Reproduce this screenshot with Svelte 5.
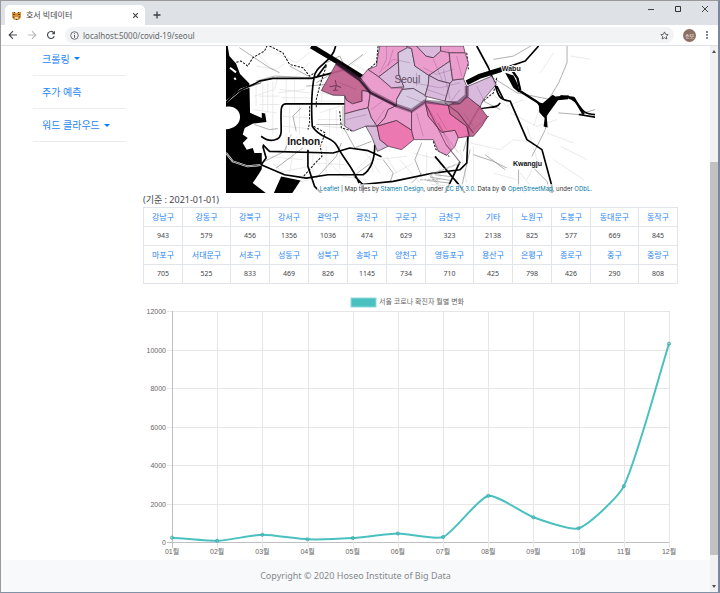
<script>
  const menu = [
    { label: '크롤링', more: true },
    { label: '주가 예측', more: false },
    { label: '워드 클라우드', more: true },
  ];

  const rows = [
    [['강남구', 943], ['강동구', 579], ['강북구', 456], ['강서구', 1356], ['관악구', 1036], ['광진구', 474], ['구로구', 629], ['금천구', 323], ['기타', 2138], ['노원구', 825], ['도봉구', 577], ['동대문구', 669], ['동작구', 845]],
    [['마포구', 705], ['서대문구', 525], ['서초구', 833], ['성동구', 469], ['성북구', 826], ['송파구', 1145], ['양천구', 734], ['영등포구', 710], ['용산구', 425], ['은평구', 798], ['종로구', 426], ['중구', 290], ['중랑구', 808]],
  ];
  const wide = [1, 7, 11];

  // district outlines: [fill, points]
  const pink = '#e995ca', lilac = '#d6b4da', pale = '#d4c4de', rose = '#ea6daa', wine = '#bf5d8c';
  const districts = [
    [wine, '60,52 15,133 50,147 85,148 90,162 108,173 137,165 137,133 162,138 130,100'],
    [pink, '85,150 90,162 108,173 137,165 137,133 162,138 155,185 125,192 85,203'],
    [lilac, '85,203 125,192 155,185 165,215 182,240 148,240 110,255 85,240'],
    [lilac, '148,240 182,240 190,280 215,300 183,315 165,270'],
    [pink, '162,138 240,178 215,190 205,215 182,240 165,215 155,185'],
    [pink, '215,190 240,178 285,195 285,252 240,223 182,240 205,215'],
    [rose, '182,240 240,223 285,252 292,280 255,310 215,300 190,280'],
    [pink, '285,195 325,165 335,210 375,258 415,252 425,272 415,300 390,327 365,315 350,280 292,280 285,252'],
    [rose, '325,165 395,178 400,203 450,240 458,270 425,275 415,252 375,258 335,210'],
    [wine, '395,178 450,150 490,182 512,212 495,240 470,270 458,270 450,240 400,203'],
    [lilac, '450,150 450,122 525,90 538,115 500,160 490,182'],
    [pink, '132,95 155,70 187,92 225,125 258,125 240,160 240,178 162,138'],
    [pink, '190,0 270,0 272,8 245,20 245,48 187,92 155,70 180,60 185,25'],
    [lilac, '187,92 245,48 247,85 262,122 225,125'],
    [pale, '245,20 272,5 285,8 295,60 337,88 335,115 325,150 290,127 258,130 262,122 247,85'],
    [pale, '258,130 290,127 330,150 325,168 285,195 240,178 240,160'],
    [pink, '270,0 300,0 328,30 350,35 372,15 395,8 400,45 337,88 295,60 285,8'],
    [lilac, '300,0 372,0 372,15 350,35 328,30'],
    [lilac, '337,88 400,45 408,103 400,112 365,103'],
    [lilac, '337,88 365,103 400,112 385,165 325,150 335,115'],
    [lilac, '408,102 440,98 450,120 450,150 430,172 385,165 400,112'],
    [pink, '400,45 398,20 445,20 455,50 440,98 408,102'],
    [pink, '372,0 440,0 445,20 398,20 372,15'],
  ];

  const values = [225, 60, 375, 140, 205, 440, 260, 2400, 1280, 715, 2900, 10300];
  const left = 29, right = 526, top = 21, bottom = 252;
  const points = values.map((v, i) => ({
    x: left + ((right - left) * i) / 11,
    y: bottom - ((bottom - top) * v) / 12000,
    label: String(i + 1).padStart(2, '0') + '월',
  }));
  const ticks = [0, 2000, 4000, 6000, 8000, 10000, 12000].map((v) => ({
    v, y: Math.round(bottom - ((bottom - top) * v) / 12000) + 0.5,
  }));

  function spline(ps, tension) {
    const ctl = ps.map((p, i) => {
      const a = ps[i - 1] ?? p, b = ps[i + 1] ?? p;
      const d1 = Math.hypot(p.x - a.x, p.y - a.y), d2 = Math.hypot(b.x - p.x, b.y - p.y);
      const fa = (tension * d1) / (d1 + d2), fb = (tension * d2) / (d1 + d2);
      return {
        px: p.x - fa * (b.x - a.x), py: p.y - fa * (b.y - a.y),
        nx: p.x + fb * (b.x - a.x), ny: p.y + fb * (b.y - a.y),
      };
    });
    return ps.map((p, i) => i === 0
      ? `M${p.x} ${p.y}`
      : `C${ctl[i - 1].nx} ${ctl[i - 1].ny} ${ctl[i].px} ${ctl[i].py} ${p.x} ${p.y}`).join('');
  }
  const line = spline(points, 0.2);
</script>

<div class="window">
  <header class="tabs">
    <div class="tab">
      <svg class="fav" viewBox="0 0 9 9" aria-hidden="true">
        <path d="M0 1h2l1 1h3l1-1h2v3l-1 4-2 1H3L1 8 0 4z" fill="#d98e32" />
        <path d="M2 1.5h1.3M5.7 1.5H7M1 3.5h2M6 3.5h2M.5 6h1.7M6.8 6h1.7M4 8.5h1" stroke="#573b27" />
        <path d="M3 6h3v1.500H3z" fill="#f5e4c8" />
      </svg>
      <span>호서 빅데이터</span>
      <button class="icon" aria-label="Close tab">
        <svg width="7" height="7" viewBox="0 0 7 7"><path d="M1.200 1.200l4.600 4.600M5.800 1.200L1.200 5.800" stroke="#3c4043" stroke-width="1.100" /></svg>
      </button>
    </div>
    <button class="icon plus" aria-label="New tab">
      <svg width="8" height="8" viewBox="0 0 8 8"><path d="M4 .5v7M.5 4h7" stroke="#3c4043" stroke-width="1.300" /></svg>
    </button>
    <div class="controls">
      <button class="icon" aria-label="Minimize"><svg width="8" height="8" viewBox="0 0 8 8"><path d="M1 4.500h6" stroke="#444" /></svg></button>
      <button class="icon" aria-label="Maximize"><svg width="8" height="8" viewBox="0 0 8 8"><path d="M1.500 1.500h5v5h-5z" fill="none" stroke="#333" /></svg></button>
      <button class="icon" aria-label="Close"><svg width="8" height="8" viewBox="0 0 8 8"><path d="M1 1l6 6M7 1L1 7" stroke="#333" stroke-width=".9" /></svg></button>
    </div>
  </header>

  <nav class="toolbar" aria-label="Browser">
    <button class="icon" aria-label="Back"><svg width="10" height="10" viewBox="0 0 10 10"><path d="M9 5H1.500M5 1.200L1.200 5 5 8.800" fill="none" stroke="#4a4d51" stroke-width="1.200" /></svg></button>
    <button class="icon" aria-label="Forward"><svg width="10" height="10" viewBox="0 0 10 10"><path d="M1 5h7.500M5 1.200L8.800 5 5 8.800" fill="none" stroke="#b9bbbe" stroke-width="1.200" /></svg></button>
    <button class="icon" aria-label="Reload"><svg width="10" height="10" viewBox="0 0 10 10"><path d="M8.300 6.200A3.500 3.500 0 1 1 7.500 2.500L8.500 3.500" fill="none" stroke="#4a4d51" stroke-width="1.200" /><path d="M9 .8v3.400H5.600z" fill="#4a4d51" /></svg></button>
    <div class="address">
      <svg width="9" height="9" viewBox="0 0 9 9" aria-hidden="true"><circle cx="4.500" cy="4.500" r="3.800" fill="none" stroke="#5f6368" stroke-width=".9" /><path d="M4.500 4v2.800M4.500 2.200v1" stroke="#5f6368" /></svg>
      <input aria-label="Address" value="localhost:5000/covid-19/seoul" />
      <button class="icon" aria-label="Bookmark"><svg width="9" height="9" viewBox="0 0 9 9"><path d="M4.500 .9l1.100 2.400 2.600.3-1.900 1.800.5 2.600-2.300-1.300L2.200 8l.5-2.600L.8 3.600l2.600-.3z" fill="none" stroke="#55585c" stroke-width=".9" /></svg></button>
    </div>
    <button class="avatar">승모</button>
    <button class="icon" aria-label="Menu"><svg width="4" height="10" viewBox="0 0 4 10" fill="#4a4d51"><circle cx="2" cy="2" r=".9" /><circle cx="2" cy="5" r=".9" /><circle cx="2" cy="8" r=".9" /></svg></button>
  </nav>

  <div class="view">
    <div class="page">
      <div class="body">
        <nav class="side" aria-label="메뉴">
          {#each menu as item}
            <a href="#menu">{item.label}{#if item.more}<i></i>{/if}</a>
          {/each}
        </nav>

        <main>
          <div class="map">
            <svg viewBox="0 0 368 147" role="img" aria-label="서울 지도">
              <g transform="scale(.33333)" fill="none" stroke-linejoin="round">
                <!-- faint streets -->
                <g stroke="#e0e0e0" stroke-width="2">
                  <path d="M85 150l60-20 10-40 80 5M80 190l70 10M90 120v60M110 115v80M140 105v160M190 180v80M220 175v90M160 130l90 10M165 155h90M170 210l80 5M170 240l90 8M280 200l60-20M290 240l60 5M260 320v60M300 300v80M340 320v50M120 330l110 10M140 350l60 60 50-10M200 320l-10 60M270 350l90 5M370 390l60-60 10 50M480 330l30 50M450 340l90-10M520 340l60 70M600 320v70M150 20l60 30 40-30M90 20l50 50M200 100l50-50" />
                  <path d="M730 290l90 20 40-30 60 10M850 200l80 40 60-20M900 240l30 100-30 60M940 180l-20 60M960 260l80 30M1000 300l80 40M980 20l-40 60M780 130l60 50 50-20M760 30l60 60M1030 30l60 10M800 380l70 20M880 380l40 50M980 340l90 60M700 310l20 100M740 300v120" />
                  <path d="M100 150h60M125 110v90M155 140l80-10M180 100v70M205 105v65M100 175h60M280 140l60 10M275 165h70M290 100l-5 80M310 190v80M330 190v60M275 220h75M180 260v55M210 270v45M90 60l60 10 30-20M420 20l-60 50M430 80l-60-30M460 380l-50-70M560 350l-70 40M150 380l100-20M290 330l60 60 70 10M640 340v60M560 320l80 20" />
                </g>
                <g stroke="#888" stroke-width="2">
                  <path d="M40 5l90 60 30 15M90 105l55-15 110 5M190 60l75 40M85 235l45 15 25-3M225 185l-25 25 10 45M270 235h80M350 180v60M115 345l60-30 20-50M150 365l80-60M270 395l60-65 15-40M355 250l30 55 50-20M380 390l60-45M350 70l60-45M240 120l60-5 60 30M585 290l-20 50 20 50M555 410l30-30M740 325l60 20 40 20M775 325l60 45M705 420l25-110M760 160l60 30M735 225l-25 90" />
                  <path d="M1020 0v50l-25 60-30 50-10 90-40 80M875 370v50l20 20M1104 190l-50 15-60-5M800 40l60-10 60-35M790 90l80 50 100 20M920 365l40 40 10 35" />
                  <path d="M610 392l60 10M600 402l70 8M615 414l40 4M625 385l50 6M470 340l30 40-10 30M300 50l40-20 20 40M270 110l50-30" />
                </g>
                <!-- coast and islands -->
                <path d="M0 0h5l5 30 20 22 12 32 28 28 2 88 35 15V200l10 2 4 25-40 5-25 13-6 20 15 10-15 15 12 20 18-5 5 15h22v48l-7 12-20 30 50 38H0z" fill="#000" />
                <path d="M165 390l58 12-25 38h-55z" fill="#000" />
                <path d="M0 182c22-5 42 10 42 30s-18 35-42 37z" fill="#fff" />
                <path d="M12 65l18 14M25 95l4 6M0 168l45-38 60-20M0 320l20 25 45 15 45-5" stroke="#fff" stroke-width="6" />
                <path d="M0 168l45-38 60-20M0 320l20 25 45 15 45-5" stroke="#000" stroke-width="2" />
                <!-- county limits -->
                <g stroke="#111" stroke-width="3" stroke-dasharray="7 4">
                  <path d="M0 40l25 10 20-5 20 15 15-25 35-20 10-20M130 0l40 20 20 35 40 10 20 25 15-10M300 60l-20 60-10 40v25M250 180v50l-5 20M262 240l35 20-15 40 5 30-20 20-35 40" />
                  <path d="M455 0l-5 50-30 25M340 195l5 50 35 10M720 20l5 50M620 285l8 25 40 20M810 95l-10 45-50 40M715 270l70-60" />
                </g>
                <!-- trunk roads -->
                <g stroke="#000" stroke-width="5">
                  <path d="M0 170c35-45 70-45 100-65l40-8h115l95-25M165 255c0-60-5-82 15-82h175M105 270c25 20 60 15 60-15M328 0c-10 50-60 55-65 95-10 60-8 100-5 145 25 40 60 30 75 60 20 40 45 60 65 110M110 295l20 20 190 5 50-15 55 8 40 18M110 300l10 35-15 20 70 30 65 10 65-10h105c30-20 35-60 35-90M245 310v50l20 60 20 20M385 390l25 25v26M300 55l-30 40" />
                  <path d="M400 415l100-10 120-25 80-10 20-20 5-110 35-60M655 441l45-95M625 330l80 95 10 16M635 230l40 80M750 0l35 65 20 50c10 45 20 45 45 50l50 115 45 30 30 110v20M750 190c40-10 60-2 70-20M835 65l60-20 40-45M810 120l20 40" />
                </g>
                <path d="M700 350l-90 35 30 35M580 400h60" stroke="#aaa" stroke-width="5" stroke-dasharray="2 2" />
                <!-- river and reservoirs -->
                <path d="M255 0l75 45 80 50M720 110l40-20 65-20" stroke="#000" stroke-width="15" />
                <path d="M822 70l35 5 15 22 8 35M872 130l60 38 12 15M1000 150l40 5 30 50" stroke="#000" stroke-width="7" />
                <path d="M835 80l25 8 14 30 3 22-18-15zM935 168l12 3 30-25 8 5 40-4-2 12-30 3-18 25-16 22 3 35-12-3 3-25-16-18z" fill="#000" />
                <path d="M1025 155c40 10 25 50 79 50M1055 205l49 8" stroke="#000" stroke-width="5" />
              </g>
              <g transform="scale(.33333) translate(270 0)" stroke-linejoin="round">
                {#each districts as [fill, pts]}
                  <polygon points={pts} {fill} fill-opacity=".92" stroke="#3f2a3b" stroke-width="2" />
                {/each}
                <g fill="none">
                  <path d="M60 52l70 48 32 38 78 40 45 16 40-28 60 6 40-2 25-22V120" stroke="#4e2549" stroke-opacity=".5" stroke-width="12" />
                  <path d="M60 52l70 50 32 38 78 40" stroke="#201020" stroke-opacity=".7" stroke-width="6" />
                  <path d="M200 70l30-30 50 10M210 0v40l-20 40M230 10l-15 50M320 65l40 20 50-15M350 40l30 70M420 30l15 60M300 80v40M70 110l50 20M165 190l40-30 30 20M90 220l60-15M300 200l20 70M270 150l50 20M360 200l30 50M430 130l-30 40M480 120l20 40M440 200l30 40M325 170l50 80 50 70M170 240l35-50M290 110l80 15 60-15M330 130l60 20M380 70l20 90" stroke="#713b68" stroke-opacity=".4" stroke-width="2" />
                  <path d="M385 170l40 30 45 60M328 175l60 120 40 50" stroke="#4b153a" stroke-opacity=".6" stroke-width="3" />
                  <path d="M57 102l3 16M60 118l-20 4M60 118l14 6M60 118l-4 14M50 132h14" stroke="#753a5b" stroke-width="3" />
                </g>
              </g>
              <g class="towns">
                <text x="61" y="99" font-size="10">Inchon</text>
                <text x="275" y="25" font-size="7">Wabu</text>
                <text x="286" y="120" font-size="7">Kwangju</text>
              </g>
              <text class="seoul" x="168" y="37">Seoul</text>
            </svg>
            <p class="credit">
              <a href="#leaflet">Leaflet</a> | Map tiles by <a href="#stamen">Stamen Design</a>, under <a href="#cc">CC BY 3.0</a>. Data by © <a href="#osm">OpenStreetMap</a>, under <a href="#odbl">ODbL</a>.
            </p>
          </div>

          <p class="date">(기준 : 2021-01-01)</p>

          <table>
            <colgroup>
              {#each rows[0] as _, i}<col class:wide={wide.includes(i)} />{/each}
            </colgroup>
            <tbody>
              {#each rows as row}
                <tr>{#each row as [name]}<th scope="col"><a href="#gu">{name}</a></th>{/each}</tr>
                <tr>{#each row as [, n]}<td>{n}</td>{/each}</tr>
              {/each}
            </tbody>
          </table>

          <svg class="chart" viewBox="0 0 535 270" role="img" aria-label="서울 코로나 확진자 월별 변화">
            <rect x="208" y="8" width="25" height="9" fill="#4bc0c0" stroke="#93dada" />
            <text x="236" y="14">서울 코로나 확진자 월별 변화</text>
            {#each ticks as t}
              <path d="M24 {t.y}H{right}" stroke={t.v ? '#e6e6e6' : '#bfbfbf'} />
              <text x="23" y={t.y + 2} text-anchor="end">{t.v}</text>
            {/each}
            {#each points as p, i}
              <path d="M{Math.round(p.x) + 0.5} {top}V{bottom + 6}" stroke={i ? '#e6e6e6' : '#bfbfbf'} />
              <text x={p.x} y="264" text-anchor="middle">{p.label}</text>
            {/each}
            <path d={line} fill="none" stroke="#4bc0c0" stroke-width="2" />
            {#each points as p}
              <circle cx={p.x} cy={p.y} r="1.600" fill="#4bc0c0" fill-opacity=".5" stroke="#3eabab" stroke-opacity=".8" />
            {/each}
          </svg>
        </main>
      </div>
      <footer>Copyright © 2020 Hoseo Institute of Big Data</footer>
    </div>

    <div class="scroll" aria-hidden="true">
      <i class="up"></i>
      <div class="track"><div class="thumb"></div></div>
      <i class="down"></i>
    </div>
  </div>
</div>

<style>
  :global(body) { margin: 0; }
  .window {
    box-sizing: border-box;
    min-height: 100vh;
    display: flex;
    flex-direction: column;
    border: 1px solid #9a9a9d;
    border-right: 2px solid #7b86a0;
    border-bottom-color: #8292a6;
    background: #fff;
    color: #3f454b;
    font-family: "Noto Sans", "Noto Sans CJK KR", sans-serif;
    font-size: 8px;
  }
  .icon {
    display: flex;
    padding: 0;
    border: 0;
    background: none;
  }
  .tabs {
    display: flex;
    height: 24px;
    background: #dee1e6;
  }
  .tab {
    box-sizing: border-box;
    display: flex;
    align-items: center;
    gap: 5px;
    width: 140px;
    margin: 4px 0 0 4px;
    padding: 0 6px 0 7px;
    border-radius: 5px 5px 0 0;
    background: #fff;
    line-height: 12px;
  }
  .tab span { flex: 1; }
  .fav { width: 9px; height: 9px; }
  .plus { margin: 10px 0 0 8px; }
  .controls {
    display: flex;
    gap: 19px;
    margin: 4px 9px 0 auto;
  }
  .toolbar {
    display: flex;
    align-items: center;
    gap: 9px;
    height: 20px;
    padding: 0 9px 0 7px;
    border-bottom: 1px solid #dfe1e4;
  }
  .address {
    flex: 1;
    display: flex;
    align-items: center;
    gap: 4px;
    height: 16px;
    padding: 0 5px;
    border-radius: 8px;
    background: #f1f3f4;
  }
  .address input {
    flex: 1;
    min-width: 0;
    padding: 0;
    border: 0;
    background: none;
    color: #64686c;
    font: inherit;
  }
  .avatar {
    width: 13px;
    height: 13px;
    padding: 0;
    border: 0;
    border-radius: 50%;
    background: #8d6e63;
    color: #fff;
    font: 5px/13px "Noto Sans CJK KR", sans-serif;
  }
  .view { flex: 1; display: flex; }
  .page {
    flex: 1;
    min-width: 0;
    display: flex;
    flex-direction: column;
  }
  .body {
    flex: 1;
    display: grid;
    grid-template-columns: 93px 1fr;
    gap: 17px;
    padding: 0 32px;
  }
  .side a {
    display: flex;
    align-items: center;
    gap: 4px;
    height: 32px;
    padding-left: 9px;
    border-bottom: 1px solid #ececee;
    color: #2a86f5;
    font-size: 10px;
    line-height: 16px;
    text-decoration: none;
  }
  .side a:first-child { height: 25px; padding-bottom: 4px; }
  .side i {
    border: 3px solid transparent;
    border-top-color: #0b7bff;
    border-bottom: 0;
  }
  main { min-width: 0; }
  .map {
    position: relative;
    width: 69%;
    margin: 0 auto;
    overflow: hidden;
  }
  .map svg { display: block; width: 100%; }
  .towns { fill: #111; font-family: "Liberation Sans", sans-serif; font-weight: bold; }
  .towns text { paint-order: stroke; stroke: #fff; stroke-width: 2px; stroke-linejoin: round; }
  .seoul { font: 10px "Liberation Sans", sans-serif; fill: #63495f; }
  .credit {
    position: absolute;
    right: 0;
    bottom: 0;
    margin: 0;
    padding: 0 3px;
    background: rgb(255 255 255 / 70%);
    color: #333;
    font: 6px/9px Inter, "Liberation Sans", sans-serif;
    white-space: nowrap;
  }
  .credit a { color: #0078a8; text-decoration: none; }
  .date {
    margin: 0;
    font-size: 9px;
    line-height: 14px;
  }
  table {
    width: 100%;
    border-collapse: collapse;
    table-layout: fixed;
  }
  col.wide { width: 9%; }
  th, td {
    height: 18px;
    padding: 0;
    border: 1px solid #e1e5e9;
    font-size: 7px;
    font-weight: normal;
    line-height: 16px;
    text-align: center;
  }
  th { font-size: 8px; }
  th a { color: #2a86f5; text-decoration: none; }
  .chart {
    display: block;
    width: 100%;
    margin-top: 6px;
    overflow: visible;
  }
  .chart text {
    fill: #666;
    font: 7px "Liberation Sans", "Noto Sans CJK KR", sans-serif;
  }
  footer {
    height: 32px;
    background: #f8f9fa;
    color: #85898d;
    font-size: 9px;
    line-height: 32px;
    text-align: center;
  }
  .scroll {
    display: flex;
    flex-direction: column;
    align-items: center;
    width: 8px;
    background: #f1f1f1;
  }
  .scroll i { margin: 4px 0; border: 2px solid transparent; }
  .scroll .up { border-top: 0; border-bottom: 3px solid #505050; }
  .scroll .down { border-bottom: 0; border-top: 3px solid #505050; }
  .track { flex: 1; display: flex; align-items: flex-end; padding-bottom: 26px; }
  .thumb { width: 8px; height: 79%; background: #c1c1c1; }
</style>
